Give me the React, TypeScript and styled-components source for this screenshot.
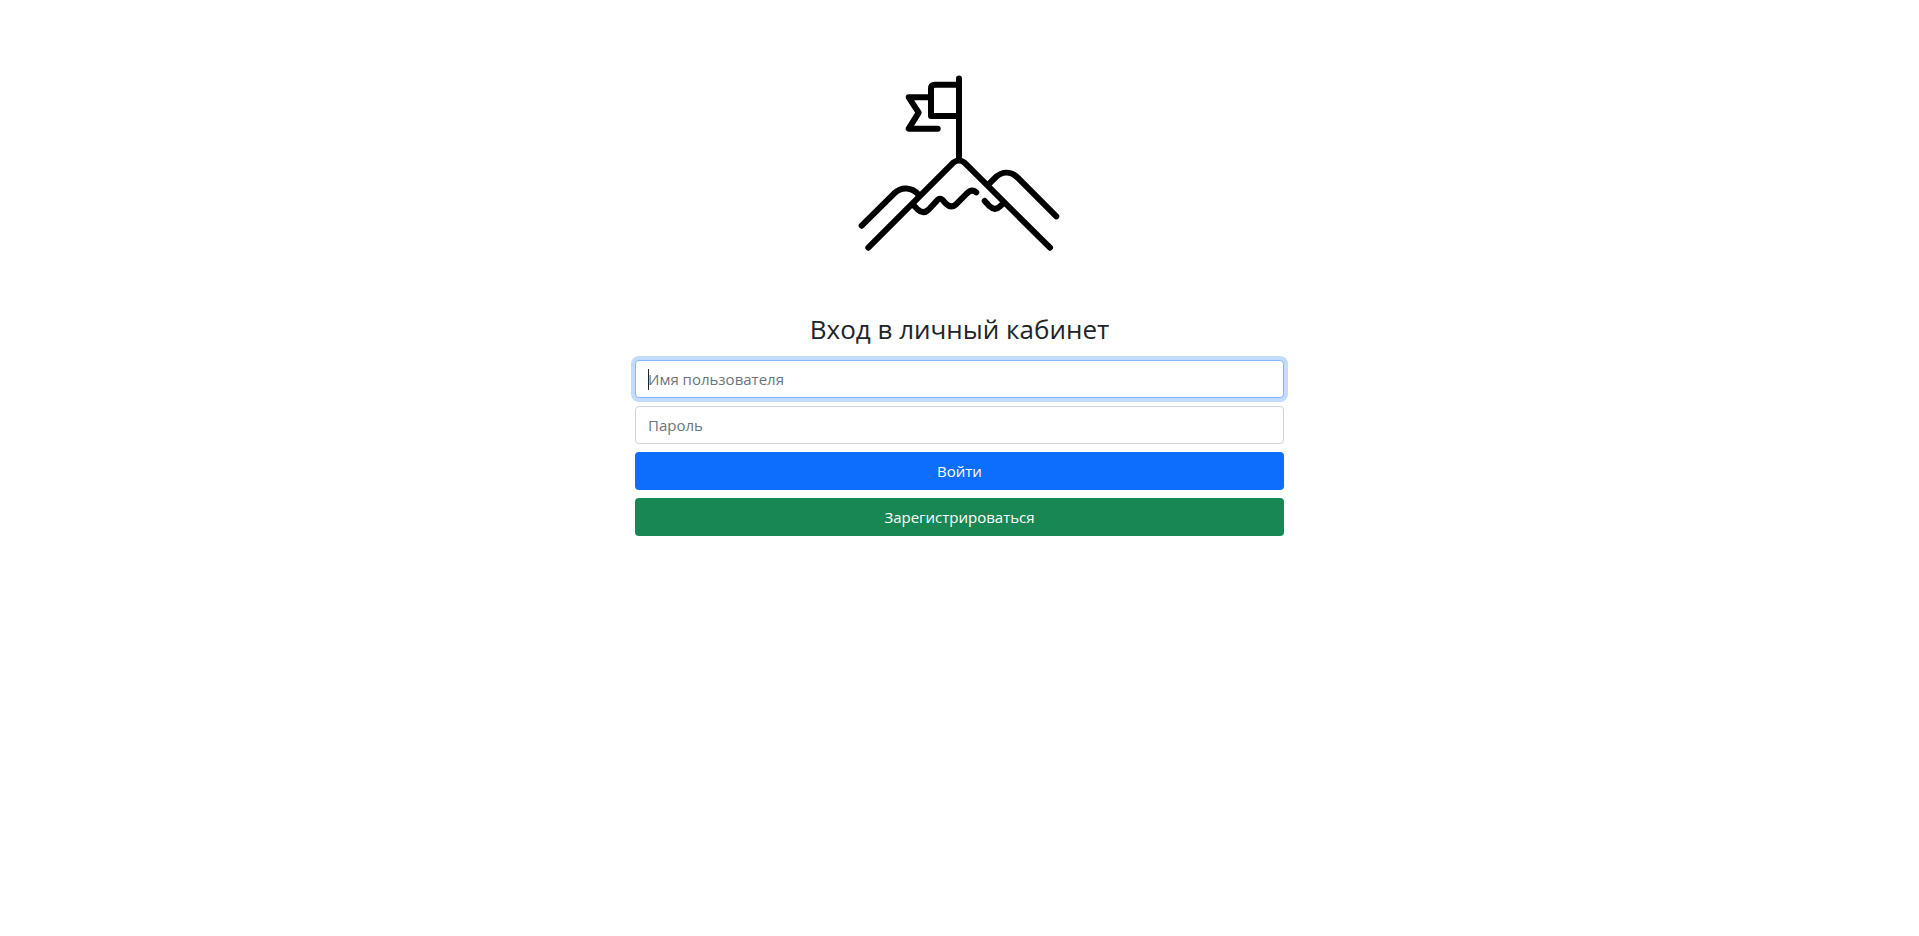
import React from "react";
import styled, { createGlobalStyle, css } from "styled-components";

const GlobalStyle = createGlobalStyle`
  *, *::before, *::after { box-sizing: border-box; }
  body {
    margin: 0;
    background: #fff;
    color: #212529;
    font-family: "Segoe UI", "Open Sans", "Noto Sans", sans-serif;
    font-size: 15px;
    line-height: 24px;
  }
`;

const Page = styled.main`
  display: flex;
  justify-content: center;
  padding: 63px 12px 48px;
`;

const LoginForm = styled.form`
  display: flex;
  flex-direction: column;
  gap: 8px;
  width: 100%;
  max-width: 649px;
`;

const Logo = styled.svg`
  align-self: center;
  width: 200px;
  height: 200px;
  margin-bottom: 41px;
  overflow: visible;
  fill: none;
  stroke: #000;
  stroke-width: 6;
  stroke-linecap: round;
  stroke-linejoin: round;
`;

const Title = styled.h1`
  margin: 0 0 6px;
  font-size: 26px;
  font-weight: 400;
  line-height: 34px;
  text-align: center;
`;

const controlShape = css`
  width: 100%;
  height: 38px;
  padding: 6px 12px;
  border: 1px solid transparent;
  border-radius: 4px;
  font: inherit;
`;

const TextField = styled.input`
  ${controlShape}
  border-color: #ced4da;
  background: #fff;
  color: #212529;

  &::placeholder {
    color: #6c757d;
    opacity: 1;
  }

  &:focus {
    border-color: #86b7fe;
    outline: 0;
    box-shadow: 0 0 0 4px rgba(13, 110, 253, 0.25);
  }

  /* Steady caret while the focused field is still empty */
  &:focus:placeholder-shown {
    caret-color: transparent;
    background: linear-gradient(#212529, #212529) 12px center / 1px 21px no-repeat #fff;
  }
`;

const Button = styled.button<{ $color: string }>`
  ${controlShape}
  background: ${({ $color }) => $color};
  color: #fff;
  cursor: pointer;
`;

const MountainLogo = () => (
  <Logo viewBox="0 0 200 200" role="img" aria-label="Гора с флагом">
    <path d="M99 15.5V97" />
    <path d="M99 21.7H75Q71 21.7 71 25.7V53H99" />
    <path d="M71 34.3H48.7L58.7 49.7L48.7 65.7H77.7" />
    <path d="M8.3 184.7L93.3 99.7Q98.9 95.3 104.5 99.7L190 184.7" />
    <path d="M1.7 162.7L34.3 130.3C41.5 123.5 51.5 123.8 59 132" />
    <path d="M128.3 121.7L134 115.9C141.5 108 150.5 108 157.7 114.7L196.3 153.3" />
    <path d="M52.7 141.3L57.7 146.5Q63.3 151.8 68.7 146.5L76.3 138.4Q80 133.4 83.7 138.2L86 140.8Q91.3 145.8 96.2 141.2L106.7 130.7Q111.5 125.6 116.3 129.3" />
    <path d="M124.7 138L129.5 143.2Q135 148.5 140.3 143.2L143.3 140.3" />
  </Logo>
);

export default function App() {
  return (
    <>
      <GlobalStyle />
      <Page>
        <LoginForm onSubmit={(event) => event.preventDefault()}>
          <MountainLogo />
          <Title>Вход в личный кабинет</Title>
          <TextField
            type="text"
            name="username"
            placeholder="Имя пользователя"
            aria-label="Имя пользователя"
            autoComplete="username"
            autoFocus
          />
          <TextField
            type="password"
            name="password"
            placeholder="Пароль"
            aria-label="Пароль"
            autoComplete="current-password"
          />
          <Button type="submit" $color="#0d6efd">Войти</Button>
          <Button type="button" $color="#198754">Зарегистрироваться</Button>
        </LoginForm>
      </Page>
    </>
  );
}
